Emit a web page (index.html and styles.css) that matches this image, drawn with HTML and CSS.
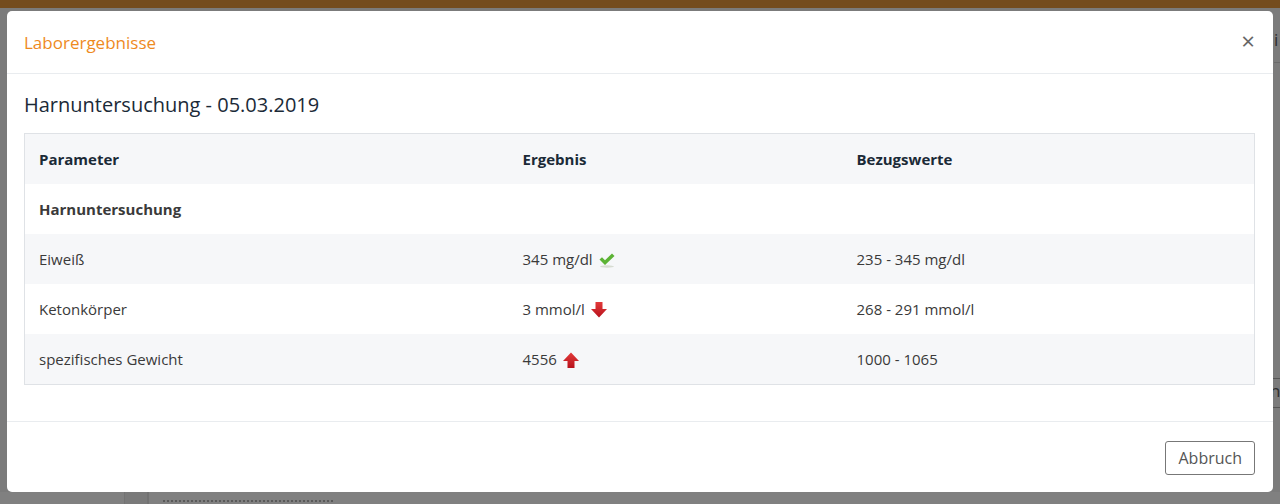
FILE: index.html
```html
<!DOCTYPE html>
<html>
<head>
	<meta charset="UTF-8">
	<title>Laborergebnisse</title>
	<link rel="stylesheet" href="styles.css">
</head>
<body>
<div class="topbar"></div>
<div class="backdrop">
    <div class="bg-side">i</div>
    <div class="bg-side bg-side2">nt</div>
    <div class="bg-bottom">
        <span class="bg-col"></span>
        <span class="bg-line"></span>
    </div>
</div>

<div class="modal">
    <div class="modal-header">
        <h5 class="modal-title">Laborergebnisse</h5>
        <span class="close">&times;</span>
    </div>
    <div class="modal-body">
        <h4 class="subtitle">Harnuntersuchung - 05.03.2019</h4>
        <table class="results">
            <colgroup>
                <col class="c1"><col class="c2"><col class="c3">
            </colgroup>
            <thead>
                <tr><th>Parameter</th><th>Ergebnis</th><th>Bezugswerte</th></tr>
            </thead>
            <tbody>
                <tr class="group"><td>Harnuntersuchung</td><td></td><td></td></tr>
                <tr class="odd">
                    <td>Eiweiß</td>
                    <td>345 mg/dl <svg class="ico" width="18" height="16" viewBox="0 0 18 16"><ellipse cx="9" cy="14.5" rx="7" ry="1.2" fill="#d7dcd2"/><path d="M1.5 7.5 L4 5.2 L7 8.2 L14 1.5 L16.5 4 L7 13 Z" fill="#5cb335"/></svg></td>
                    <td>235 - 345 mg/dl</td>
                </tr>
                <tr>
                    <td>Ketonkörper</td>
                    <td>3 mmol/l <svg class="ico" width="18" height="18" viewBox="0 0 18 18"><defs><linearGradient id="gd" x1="0" y1="0" x2="0" y2="1"><stop offset="0" stop-color="#e23a3a"/><stop offset="1" stop-color="#b8121c"/></linearGradient></defs><path d="M5.5 1 H12.5 V8 H17 L9 16.5 L1 8 H5.5 Z" fill="url(#gd)"/></svg></td>
                    <td>268 - 291 mmol/l</td>
                </tr>
                <tr class="odd">
                    <td>spezifisches Gewicht</td>
                    <td>4556 <svg class="ico" width="18" height="18" viewBox="0 0 18 18"><defs><linearGradient id="gu" x1="0" y1="0" x2="0" y2="1"><stop offset="0" stop-color="#e23a3a"/><stop offset="1" stop-color="#b8121c"/></linearGradient></defs><path d="M5.5 17 H12.5 V10 H17 L9 1.5 L1 10 H5.5 Z" fill="url(#gu)"/></svg></td>
                    <td>1000 - 1065</td>
                </tr>
            </tbody>
        </table>
    </div>
    <div class="modal-footer">
        <button class="btn">Abbruch</button>
    </div>
</div>
</body>
</html>
```

FILE: styles.css
```css
html, body{
    margin: 0;
    padding: 0;
    height: 504px;
    overflow: hidden;
}
body{
    background-color: #7b7b7b;
    font-family: "Open Sans", "Lato", sans-serif;
    color: #333;
    position: relative;
}
.topbar{
    height: 8px;
    background-color: #744c1e;
}
.backdrop{
    position: absolute;
    top: 8px;
    left: 0;
    right: 0;
    bottom: 0;
}
.bg-side{
    position: absolute;
    right: 0;
    top: 22px;
    font-size: 17px;
    line-height: 20px;
    color: #2e2e2e;
    width: 6px;
    overflow: hidden;
    border-bottom: 1px solid #6a6a6a;
    padding-bottom: 12px;
}
.bg-side2{
    top: 370px;
    width: 7px;
    border-top: 1px solid #555;
    border-bottom: 1px solid #555;
    padding: 2px 0 6px;
    text-indent: -3px;
}
.bg-bottom{
    position: absolute;
    left: 0;
    right: 0;
    bottom: 0;
    height: 12px;
    background-color: #808080;
    overflow: hidden;
}
.bg-col{
    position: absolute;
    top: 0;
    bottom: 0;
    left: 124px;
    width: 22px;
    background-color: #7a7a7a;
    border-left: 1px solid #737373;
    border-right: 2px solid #727272;
}
.bg-line{
    position: absolute;
    left: 163px;
    top: 8px;
    width: 170px;
    height: 4px;
    border-top: 2px dotted #5a5a5a;
}
.modal{
    position: absolute;
    top: 11px;
    left: 7px;
    width: 1266px;
    height: 481px;
    background-color: #fff;
    border-radius: 5px;
    display: flex;
    flex-direction: column;
}
.modal-header{
    height: 62px;
    border-bottom: 1px solid #e9ecef;
    display: flex;
    align-items: center;
    justify-content: space-between;
    padding: 0 17px;
}
.modal-title{
    margin: 0;
    font-size: 17px;
    font-weight: normal;
    color: #ee8a1e;
}
.close{
    font-size: 24px;
    color: #666;
    line-height: 1;
    margin-top: -2px;
    margin-right: 1px;
}
.modal-body{
    flex: 1;
    padding: 17px 17px 0;
    border-bottom: 1px solid #e9ecef;
}
.subtitle{
    margin: 0 0 14px;
    font-size: 20px;
    font-weight: normal;
    color: #1b2a37;
    line-height: 28px;
}
.results{
    width: 1231px;
    border-collapse: collapse;
    border: 1px solid #dfe2e6;
    font-size: 15px;
}
.c1{ width: 484px; }
.c2{ width: 334px; }
.results th, .results td{
    height: 50px;
    padding: 0 14px;
    text-align: left;
    vertical-align: middle;
}
.results th{
    background-color: #f6f7f9;
    color: #1b2a37;
    font-weight: bold;
}
.group td{
    font-weight: bold;
    color: #1b2a37;
}
.odd td{
    background-color: #f6f7f9;
}
.results td{
    color: #3a3a3a;
}
.ico{
    vertical-align: middle;
    margin-left: 1px;
    margin-top: -2px;
}
.modal-footer{
    height: 70px;
    display: flex;
    align-items: center;
    justify-content: flex-end;
    padding: 0 18px;
}
.btn{
    font-family: inherit;
    font-size: 16px;
    color: #555;
    background-color: #fff;
    border: 1px solid #777;
    border-radius: 3px;
    padding: 0 12px;
    height: 34px;
    margin-top: 2px;
}
```
